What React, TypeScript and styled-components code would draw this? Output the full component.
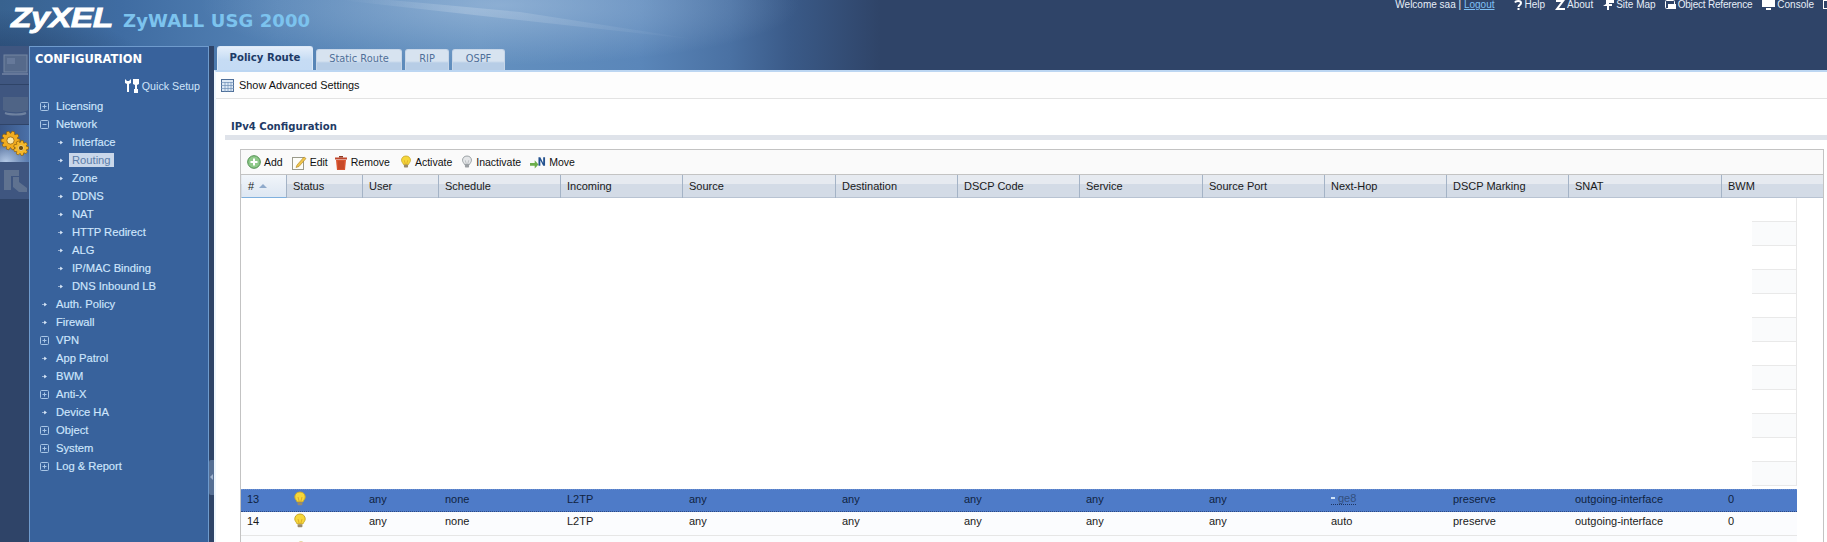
import React from "react";
import styled, { createGlobalStyle } from "styled-components";

const Global = createGlobalStyle`
  html, body { margin: 0; padding: 0; height: 542px; overflow: hidden; background: #fff; }
  #root { height: 542px; }
  * { box-sizing: border-box; }
`;

const Page = styled.div`
  width: 1827px; height: 542px; overflow: hidden;
  background-color: #2f4468;
  background-image:
    radial-gradient(ellipse 150px 60px at 0 70px, rgba(32,58,98,.75), rgba(32,58,98,0)),
    radial-gradient(ellipse 300px 60px at 500px 5px, rgba(175,200,228,.55), rgba(175,200,228,0)),
    linear-gradient(90deg, #38628f 0, #3f6ca2 120px, #5583b5 280px, #6390bf 480px, #5a86b9 640px, #4a71a3 730px, #3a5a88 790px, #2f4468 880px);
  background-size: 100% 70px;
  background-repeat: no-repeat;
  font-family: "Liberation Sans", Arial, sans-serif;
  display: flex; flex-direction: column;
`;
const Header = styled.header`
  height: 46px; flex: none; display: flex; justify-content: space-between; align-items: flex-start; position: relative;
`;
const HeaderArt = styled.svg`position: absolute; left: 0; top: 0;`;
const Brand = styled.div`display: flex; align-items: baseline; padding: 0 0 0 11px; position: relative;`;
const Logo = styled.span`
  display: inline-block; width: 112px;
  font: italic 700 28px/36px "Liberation Sans", sans-serif; color: #fff; letter-spacing: -0.5px;
  transform: scaleX(1.2); transform-origin: left; -webkit-text-stroke: 0.8px #fff;
`;
const Product = styled.span`
  font: 700 18px/36px "DejaVu Sans", sans-serif; color: #7cc3ee; letter-spacing: 0.1px;
`;
const TopLinks = styled.nav`
  display: flex; align-items: center; height: 10px; color: #e6eef8; position: relative;
  font: 10px/10px "Liberation Sans", sans-serif; white-space: nowrap;
`;
const Welcome = styled.span`margin-right: 20px; a { color: #7fc0f5; text-decoration: underline; }`;
const TopLink = styled.span<{ $gap: number; $tight?: boolean }>`
  display: inline-flex; align-items: center; gap: 2px; margin-right: ${p => p.$gap}px;
  letter-spacing: ${p => p.$tight ? "-0.2px" : "normal"};
  svg { flex: none; }
`;

const Body = styled.div`flex: 1; display: flex; min-height: 0;`;
const Strip = styled.aside`width: 29px; flex: none; display: flex; flex-direction: column; background: #2f4468;`;
const StripBtn = styled.div<{ $active?: boolean; $h: number }>`
  height: ${p => p.$h}px; display: flex; align-items: center; justify-content: center; flex: none;
  background: ${p => p.$active
    ? "radial-gradient(ellipse 26px 24px at 6px 100%, #b4c9e6, rgba(180,201,230,0)), linear-gradient(90deg,#3a5686,#4a70a8)"
    : "#3f5680"};
  margin-bottom: ${p => p.$active ? 0 : 1}px;
`;

const Nav = styled.div`
  width: 180px; flex: none; background: #38629c;
  border: 1px solid #6f9bcd; border-bottom: none;
`;
const NavTitle = styled.div`
  font: 700 11.5px/18px "DejaVu Sans", sans-serif; color: #fff; padding: 3px 0 0 5px; height: 28px;
`;
const Quick = styled.div`
  display: flex; justify-content: flex-end; align-items: center; gap: 3px; height: 22px;
  padding-right: 8px; color: #cfe4fa; font: 10.7px/14px "Liberation Sans", sans-serif;
`;
const Tree = styled.ul`list-style: none; margin: 0; padding: 0;`;
const TreeRow = styled.li<{ $child?: boolean }>`
  height: 18px; display: flex; align-items: center; font: 11.2px/14px "Liberation Sans", sans-serif; color: #cfe6fc;
  padding-left: ${p => p.$child ? 26 : 10}px; -webkit-text-stroke: 0.15px #cfe6fc;
`;
const TreeIcon = styled.span`
  width: 9px; height: 9px; margin-right: 7px; flex: none;
  display: inline-flex; align-items: center; justify-content: center;
`;
const Selected = styled.span`
  background: #c9d7ea; color: #5c7da8; padding: 0 3px; margin-left: -3px; height: 14px; line-height: 14px;
  -webkit-text-stroke: 0;
`;

const Splitter = styled.div`
  width: 5px; flex: none; background: #2f4468; position: relative;
  &::before { content: ""; position: absolute; left: 0; top: 414px; width: 5px; height: 35px; background: #566f94; border-radius: 2px 0 0 2px; }
  &::after { content: ""; position: absolute; left: 1px; top: 428px; width: 0; height: 0;
    border-style: solid; border-width: 3px 3px 3px 0; border-color: transparent #9fb2cd transparent transparent; }
`;

const Main = styled.main`flex: 1; min-width: 0; display: flex; flex-direction: column;`;
const Tabs = styled.div`height: 24px; display: flex; align-items: flex-end; padding-left: 3px; gap: 3px; flex: none;`;
const Tab = styled.div<{ $active?: boolean; $w: number }>`
  width: ${p => p.$w}px; height: ${p => p.$active ? 24 : 21}px; text-align: center; flex: none;
  border-radius: 3px 3px 0 0;
  background: ${p => p.$active ? "linear-gradient(#e4eefa 0,#c6dcf4 55%,#c4dbf4)" : "linear-gradient(#d7e3f0 0 55%, #b7cde6 65% 100%)"};
  color: ${p => p.$active ? "#1d3a66" : "#4f6f99"};
  font: ${p => p.$active ? 700 : 400} ${p => p.$active ? 10.1 : 9.8}px/${p => p.$active ? 21 : 18}px "DejaVu Sans", sans-serif;
  border: 1px solid ${p => p.$active ? "#dce9f7" : "#c7d6e8"}; border-bottom: none;
`;
const Content = styled.div`
  flex: 1; min-height: 0; background: #fff; display: flex; flex-direction: column;
  border-top: 2px solid #bcd6f2; border-left: 2px solid #eef6fd;
`;
const Advanced = styled.div`
  height: 27px; flex: none; display: flex; align-items: center; gap: 5px; padding-left: 5px;
  border-bottom: 1px solid #e3e3e3; background: #fdfdfd; color: #111;
  font: 10.9px/14px "Liberation Sans", sans-serif;
`;
const Section = styled.div`padding: 19px 0 0 9px; flex: none;`;
const SectionTitle = styled.h2`
  margin: 0; padding-left: 6px; font: 700 10.1px/17px "DejaVu Sans", sans-serif; color: #1f3b66; height: 17px;
`;
const SectionRule = styled.div`height: 5px; background: #dfe3ea;`;
const Panel = styled.section`
  margin: 9px 0 0 24px; width: 1584px; flex: 1; min-height: 0;
  border: 1px solid #c3c3c3; border-bottom: none; overflow: hidden; background: #fff;
`;
const GridToolbar = styled.div`
  height: 25px; display: flex; align-items: center; padding-left: 6px; background: #fafafa;
  border-bottom: 1px solid #c3c3c3; font: 10.5px/14px "Liberation Sans", sans-serif; color: #111;
`;
const ToolItem = styled.span<{ $gap: number }>`
  display: inline-flex; align-items: center; gap: 3px; margin-right: ${p => p.$gap}px;
  svg { flex: none; }
`;

const cols = [46, 76, 76, 122, 122, 153, 122, 122, 123, 122, 122, 122, 153, 103];
const gridCols = cols.map(c => c + "px").join(" ");

const HeadRow = styled.div`
  display: grid; grid-template-columns: ${gridCols}; height: 23px;
  background: linear-gradient(#e6eaf0 0 40%, #d3dbe6 40% 100%);
  border-bottom: 1px solid #b8c3d2; width: 1582px;
`;
const HeadCell = styled.div<{ $sorted?: boolean }>`
  font: 11px/21px "Liberation Sans", sans-serif; color: #1a1a1a; padding-left: 6px;
  border-right: 1px solid #a4b3c6; white-space: nowrap; overflow: hidden;
  display: flex; align-items: center; gap: 5px;
  &:last-child { border-right: none; }
  ${p => p.$sorted ? "background: linear-gradient(#f1f5fa,#dfe8f3 90%); border-bottom: 1px solid #7fb0de; height: 23px; margin-left: 1px;" : ""}
`;
const SortArrow = styled.i`
  width: 0; height: 0; border-style: solid; border-width: 0 4px 4px 4px; border-color: transparent transparent #8faacb transparent;
`;

const RowsStage = styled.div`width: 1556px; overflow: hidden;`;
const Blank = styled.div`height: 291px; display: flex; justify-content: flex-end;`;
const GhostRows = styled.div`width: 45px; border-right: 1px solid #e8e8e8; height: 288px; overflow: hidden;`;
const GhostRow = styled.div<{ $alt?: boolean }>`
  height: 24px; border-bottom: 1px solid #e9e9e9; background: ${p => p.$alt ? "#fafbfc" : "#fff"};
`;

const Row = styled.div<{ $selected?: boolean }>`
  display: grid; grid-template-columns: ${gridCols}; height: ${p => p.$selected ? 23 : 24}px; align-items: center;
  padding-bottom: ${p => p.$selected ? 4 : 5}px;
  font: 11px/14px "Liberation Sans", sans-serif;
  color: ${p => p.$selected ? "#10233f" : "#1a1a1a"};
  background: ${p => p.$selected ? "#4e7bc8" : "#fbfcfe"};
  border-bottom: 1px ${p => p.$selected ? "dotted #2c4a86" : "solid #e6e6e6"};
  ${p => p.$selected ? "border-top: 1px dotted #6b8fd0;" : ""}
`;
const Cell = styled.div`padding-left: 6px; white-space: nowrap; display: flex; align-items: center; height: 14px;`;
const Peek = styled.div`height: 8px; padding: 5px 0 0 53px; overflow: hidden; background: #fbfcfe;`;
const DottedLink = styled.span`
  color: #33507f; border-bottom: 1px dotted #1e3560; line-height: 12px;
  &::before { content: ""; display: inline-block; width: 4px; height: 2px; background: #cfe2f7; margin: 0 3px 2px 0; vertical-align: middle; }
`;

const Bulb = ({ on = true, size = 14 }: { on?: boolean; size?: number }) => (
  <svg width={size} height={size + 2} viewBox="0 0 14 16">
    <path d="M7 1C3.800 1 1.800 3.200 1.800 5.900c0 2.200 1.600 3.200 2.300 5h5.800c.7-1.800 2.300-2.800 2.300-5C12.200 3.200 10.200 1 7 1z"
      fill={on ? "#f6d73a" : "#e4e6e8"} stroke={on ? "#c9a92c" : "#8e9498"} strokeWidth="1" />
    <path d="M5 6l1.200 4.500M9 6L7.800 10.500" stroke={on ? "#d49a1c" : "#a0a4a8"} strokeWidth=".7" fill="none" />
    <rect x="4.600" y="11.300" width="4.800" height="3" rx=".8" fill={on ? "#9a8a6a" : "#9a9ea2"} />
  </svg>
);

const Plus = () => (
  <svg width="9" height="9" viewBox="0 0 9 9">
    <rect x=".5" y=".5" width="8" height="8" rx="1" fill="none" stroke="#a9c6e6" />
    <path d="M2.500 4.500h4M4.500 2.500v4" stroke="#a9c6e6" />
  </svg>
);
const Minus = () => (
  <svg width="9" height="9" viewBox="0 0 9 9">
    <rect x=".5" y=".5" width="8" height="8" rx="1" fill="none" stroke="#a9c6e6" />
    <path d="M2.500 4.500h4" stroke="#a9c6e6" />
  </svg>
);
const Dot = () => (
  <svg width="5" height="5" viewBox="0 0 5 5"><path d="M0 2.500h3M2.500 1l2 1.500-2 1.500z" fill="#dbe9f8" stroke="#dbe9f8" strokeWidth=".6" /></svg>
);

type NavItem = { t: string; k: "plus" | "minus" | "dot"; child?: boolean; sel?: boolean };
const nav: NavItem[] = [
  { t: "Licensing", k: "plus" }, { t: "Network", k: "minus" },
  { t: "Interface", k: "dot", child: true }, { t: "Routing", k: "dot", child: true, sel: true },
  { t: "Zone", k: "dot", child: true }, { t: "DDNS", k: "dot", child: true }, { t: "NAT", k: "dot", child: true },
  { t: "HTTP Redirect", k: "dot", child: true }, { t: "ALG", k: "dot", child: true },
  { t: "IP/MAC Binding", k: "dot", child: true }, { t: "DNS Inbound LB", k: "dot", child: true },
  { t: "Auth. Policy", k: "dot" }, { t: "Firewall", k: "dot" }, { t: "VPN", k: "plus" },
  { t: "App Patrol", k: "dot" }, { t: "BWM", k: "dot" }, { t: "Anti-X", k: "plus" },
  { t: "Device HA", k: "dot" }, { t: "Object", k: "plus" }, { t: "System", k: "plus" }, { t: "Log & Report", k: "plus" },
];

const heads = ["#", "Status", "User", "Schedule", "Incoming", "Source", "Destination", "DSCP Code", "Service", "Source Port", "Next-Hop", "DSCP Marking", "SNAT", "BWM"];

const gearPoints = (cx: number, cy: number, ro: number, ri: number, teeth: number) => {
  const pts: string[] = [];
  for (let i = 0; i < teeth; i++) {
    const a = (i / teeth) * Math.PI * 2;
    const w = Math.PI / teeth;
    [[a - w * 0.9, ri], [a - w * 0.45, ro], [a + w * 0.45, ro], [a + w * 0.9, ri]].forEach(([t, r]) => {
      pts.push(`${(cx + Math.cos(t) * r).toFixed(2)},${(cy + Math.sin(t) * r).toFixed(2)}`);
    });
  }
  return pts.join(" ");
};

const Gear = () => (
  <svg width="29" height="26" viewBox="0 0 29 26">
    <polygon points={gearPoints(10.5, 9.5, 9.5, 7.2, 10)} fill="#f2ac1f" stroke="#8a5c0c" strokeWidth=".7" />
    <circle cx="10.500" cy="9.500" r="3.600" fill="#fbe7a8" stroke="#8a5c0c" strokeWidth=".7" />
    <polygon points={gearPoints(21, 17, 7.5, 5.6, 9)} fill="#f6b828" stroke="#8a5c0c" strokeWidth=".7" />
    <circle cx="21" cy="17" r="2.600" fill="#6a4a10" stroke="#f9dc8a" strokeWidth=".8" />
  </svg>
);

const RowData = ({ id, selected, hop }: { id: string; selected?: boolean; hop: React.ReactNode }) => (
  <Row $selected={selected}>
    <Cell>{id}</Cell><Cell><Bulb /></Cell><Cell>any</Cell><Cell>none</Cell><Cell>L2TP</Cell><Cell>any</Cell><Cell>any</Cell><Cell>any</Cell><Cell>any</Cell><Cell>any</Cell>
    <Cell>{hop}</Cell><Cell>preserve</Cell><Cell>outgoing-interface</Cell><Cell>0</Cell>
  </Row>
);

export default function App() {
  return (
    <Page>
      <Global />
      <Header>
        <HeaderArt width="1000" height="46" viewBox="0 0 1000 46">
          <defs>
            <linearGradient id="streak" x1="0" x2="1" y1="0" y2="0">
              <stop offset="0" stopColor="#fff" stopOpacity="0" />
              <stop offset=".35" stopColor="#fff" stopOpacity=".18" />
              <stop offset="1" stopColor="#fff" stopOpacity="0" />
            </linearGradient>
          </defs>
          <path d="M340 0L700 40L520 12L390 0z" fill="url(#streak)" />
        </HeaderArt>
        <Brand>
          <Logo>ZyXEL</Logo>
          <Product>ZyWALL USG 2000</Product>
        </Brand>
        <TopLinks>
          <Welcome>Welcome saa | <a>Logout</a></Welcome>
          <TopLink $gap={10}>
            <svg width="8" height="10" viewBox="0 0 8 10"><path d="M1 2.500C2 .5 7 .5 7 3c0 2-2.500 2-2.500 4" fill="none" stroke="#fff" strokeWidth="2" /><rect x="3.500" y="8" width="2" height="2" fill="#fff" /></svg>
            Help
          </TopLink>
          <TopLink $gap={10}>
            <svg width="10" height="10" viewBox="0 0 10 10"><path d="M1 0h9L4 8h6v2H0l6-8H1z" fill="#fff" /></svg>
            About
          </TopLink>
          <TopLink $gap={9}>
            <svg width="11" height="10" viewBox="0 0 11 10"><path d="M3 0h8v3H6v1h3v2H6v4H4V6H0l3-2z" fill="#fff" /></svg>
            Site Map
          </TopLink>
          <TopLink $gap={10} $tight>
            <svg width="11" height="10" viewBox="0 0 11 10"><rect x=".5" y=".5" width="9" height="8" rx="1" fill="none" stroke="#fff" /><rect x="3" y="4" width="8" height="5" fill="#fff" /></svg>
            Object Reference
          </TopLink>
          <TopLink $gap={9}>
            <svg width="13" height="10" viewBox="0 0 13 10"><rect width="13" height="7" fill="#fff" /><rect x="4" y="8" width="5" height="2" fill="#fff" /></svg>
            Console
          </TopLink>
          <svg width="4" height="10" viewBox="0 0 4 10"><rect x=".5" y=".5" width="6" height="8" fill="none" stroke="#fff" /></svg>
        </TopLinks>
      </Header>
      <Body>
        <Strip>
          <StripBtn $h={38}>
            <svg width="26" height="24" viewBox="0 0 26 24"><rect x="2" y="2" width="23" height="17" fill="#566a8b" stroke="#7486a2" /><path d="M0 20h26v2H0z" fill="#66789a" /><rect x="5" y="5" width="8" height="6" fill="#66799a" /></svg>
          </StripBtn>
          <StripBtn $h={39}>
            <svg width="26" height="26" viewBox="0 0 26 26"><path d="M1 5h25v13c-4 3-20 3-25 0z" fill="#4f6486" /><path d="M3 21c5 2 17 2 21 0" stroke="#6f82a0" strokeWidth="2" fill="none" /></svg>
          </StripBtn>
          <StripBtn $active $h={37}><Gear /></StripBtn>
          <StripBtn $h={37}>
            <svg width="26" height="28" viewBox="0 0 26 28"><path d="M2 3h15v6H9v14H2zM11 10h6v5l8 6v4H17l-6-5z" fill="#5f7290" /></svg>
          </StripBtn>
        </Strip>
        <Nav>
          <NavTitle>CONFIGURATION</NavTitle>
          <Quick>
            <svg width="14" height="14" viewBox="0 0 14 14"><path d="M0 0l2 2h2l2-2v4L4 5v8H2V5L0 4zM8 0h6v5l-2 1v4h1v4H9v-4h1V6L8 5z" fill="#fff" /></svg>
            Quick Setup
          </Quick>
          <Tree>
            {nav.map(n => (
              <TreeRow key={n.t} $child={n.child}>
                <TreeIcon>{n.k === "plus" ? <Plus /> : n.k === "minus" ? <Minus /> : <Dot />}</TreeIcon>
                {n.sel ? <Selected>{n.t}</Selected> : n.t}
              </TreeRow>
            ))}
          </Tree>
        </Nav>
        <Splitter />
        <Main>
          <Tabs>
            <Tab $active $w={96}>Policy Route</Tab>
            <Tab $w={86}>Static Route</Tab>
            <Tab $w={44}>RIP</Tab>
            <Tab $w={53}>OSPF</Tab>
          </Tabs>
          <Content>
            <Advanced>
              <svg width="13" height="13" viewBox="0 0 13 13"><rect x=".5" y=".5" width="12" height="12" fill="#dce8f5" stroke="#4f6f99" /><path d="M0 3.500h13M0 6.500h13M0 9.500h13M4 3v10M7 3v10M10 3v10" stroke="#6f8fb8" strokeWidth=".7" /></svg>
              Show Advanced Settings
            </Advanced>
            <Section>
              <SectionTitle>IPv4 Configuration</SectionTitle>
              <SectionRule />
            </Section>
            <Panel>
              <GridToolbar>
                <ToolItem $gap={9}>
                  <svg width="14" height="14" viewBox="0 0 14 14"><circle cx="7" cy="7" r="6.300" fill="#8fc98a" stroke="#4c8d4c" /><path d="M7 3.500v7M3.500 7h7" stroke="#fff" strokeWidth="2" /></svg>
                  Add
                </ToolItem>
                <ToolItem $gap={6}>
                  <svg width="15" height="15" viewBox="0 0 15 15"><rect x=".5" y="2.500" width="11" height="12" fill="#fdfdf8" stroke="#9a9a8a" /><path d="M5 10l7-8 2 1.500-7 8-3 1z" fill="#f1c64a" stroke="#a97f1e" strokeWidth=".6" /></svg>
                  Edit
                </ToolItem>
                <ToolItem $gap={10}>
                  <svg width="14" height="15" viewBox="0 0 14 15"><path d="M1 2.500h12v2H1z" fill="#c0452a" /><path d="M5 1h4v1.500H5z" fill="#8f3a22" /><path d="M2 5h10l-1 10H3z" fill="#d9532f" /><path d="M5 6v8M7 6v8M9 6v8" stroke="#a93a1f" strokeWidth=".7" /></svg>
                  Remove
                </ToolItem>
                <ToolItem $gap={9}><Bulb size={12} />Activate</ToolItem>
                <ToolItem $gap={9}><Bulb on={false} size={12} />Inactivate</ToolItem>
                <ToolItem $gap={0}>
                  <svg width="16" height="13" viewBox="0 0 17 13"><path d="M0 7h5V4l4 4.500L5 13v-3H0z" fill="#6cae4a" /><path d="M9 1h2l3 6V1h2v9h-2l-3-6v6H9z" fill="#23518f" /></svg>
                  Move
                </ToolItem>
              </GridToolbar>
              <HeadRow>
                {heads.map((h, i) => (
                  <HeadCell key={h} $sorted={i === 0}>{h}{i === 0 && <SortArrow />}</HeadCell>
                ))}
              </HeadRow>
              <RowsStage>
                <Blank>
                  <GhostRows>
                    {Array.from({ length: 12 }).map((_, i) => <GhostRow key={i} $alt={i % 2 === 1} />)}
                  </GhostRows>
                </Blank>
                <RowData id="13" selected hop={<DottedLink>ge8</DottedLink>} />
                <RowData id="14" hop="auto" />
                <Peek><Bulb /></Peek>
              </RowsStage>
            </Panel>
          </Content>
        </Main>
      </Body>
    </Page>
  );
}
